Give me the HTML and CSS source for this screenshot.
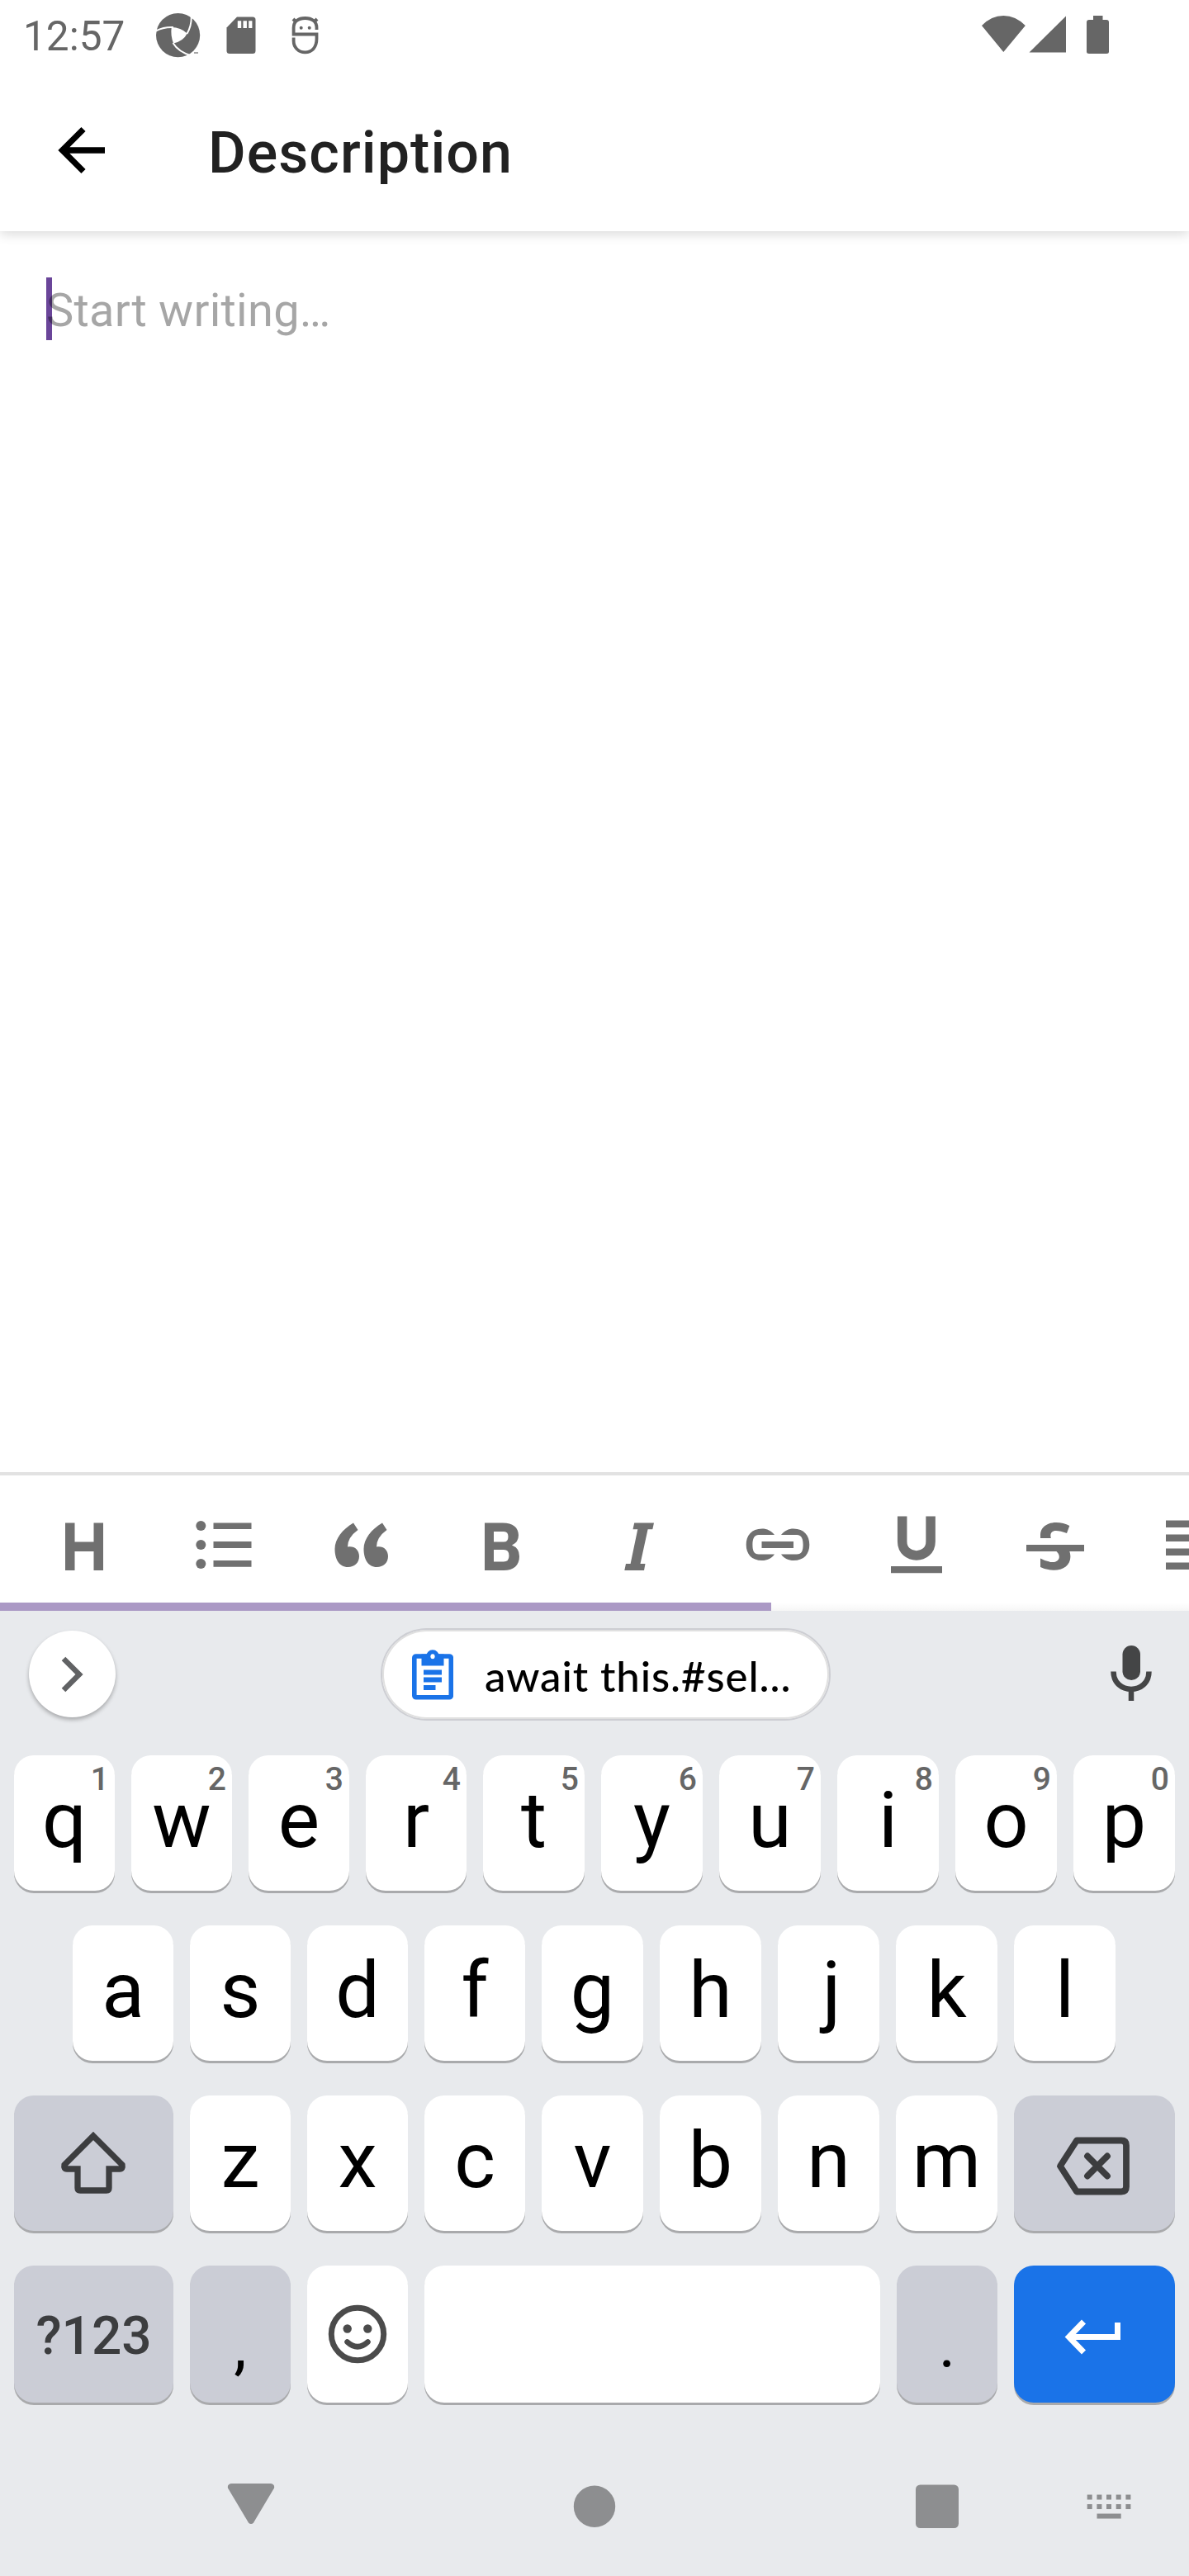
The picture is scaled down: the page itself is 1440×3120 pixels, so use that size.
FILE: index.html
```html
<!DOCTYPE html>
<html lang="en">
<head>
<meta charset="utf-8">
<title>Description</title>
<link rel="stylesheet" href="styles.css">
</head>
<body>
<div class="screen">
  <header class="top">
    <div class="status">
      <div class="status-left">
        <span class="clock">12:57</span>
        <svg class="aperture" width="54" height="54" viewBox="0 0 54 54">
          <circle cx="26.6" cy="26.6" r="26.6" fill="#666"/>
          <path d="M18.7 17Q30 17.2 37.7 24.5Q33 34 21 36.5Q17.4 27 18.7 17Z" fill="#fff"/>
          <path d="M42.5 0Q44 14 37.4 25M-1 22Q8 16.500 21 17M20.500 36Q27 47 44 52" fill="none" stroke="#fff" stroke-width="2"/>
          <path d="M46 48h5" stroke="#888" stroke-width="1.500"/>
        </svg>
        <svg class="sd" width="36" height="46" viewBox="0 0 36 46">
          <path d="M13 .5H32Q35.500 .5 35.500 4V41.500Q35.500 45 32 45H4Q.5 45 .5 41.500V13.500Z" fill="#666"/>
          <path d="M13.800 5.300h4.400v8.700h-4.400zM20.500 5.300h4.400v8.700h-4.400zM27.200 5.300h4.200v8.700h-4.200z" fill="#fff"/>
        </svg>
        <svg class="bug" width="34" height="46" viewBox="0 0 34 46" fill="none" stroke="#666" stroke-width="3.800">
          <path d="M30.500 16V13.500C30.500 6 25 2 16.500 2S2.600 6 2.600 13.500V21.500H30.500V27C30.500 37 25 43.300 16.500 43.300S2.600 37 2.600 29.500V25.500"/>
          <path d="M2 3l4 4M31 3l-4 4" stroke-width="4"/>
          <circle cx="11.700" cy="13.800" r="2" fill="#666" stroke="none"/><circle cx="21.700" cy="13.800" r="2" fill="#666" stroke="none"/>
        </svg>
      </div>
      <svg class="status-right" width="156" height="48" viewBox="0 0 156 48" fill="#666">
        <path d="M0 13Q11.500 1 26.300 1T52.800 13L26.300 45Z"/>
        <path d="M57.500 45.500L102 1.500V45.500Z"/>
        <path d="M135 1h11.500v5H151q3 0 3 3V44.500q0 2.500-3 2.500H130q-3 0-3-2.500V9q0-3 3-3h5Z"/>
      </svg>
    </div>
    <div class="appbar">
      <svg width="58" height="58" viewBox="0 0 58 58" fill="none" stroke="#000" stroke-width="7.300"><path d="M31 3.500L5.500 29L31 54.500M5.500 29H57"/></svg>
      <h1 class="title">Description</h1>
    </div>
  </header>

  <main class="editor"><span class="caret"></span><span class="placeholder">Start writing…</span></main>

  <div class="format">
    <svg class="tool" viewBox="0 0 168 164"><path d="M61 57.500h11.500v23H95.500v-23H107V115H95.500V92H72.500v23H61Z"/></svg>
    <svg class="tool" viewBox="0 0 168 164"><circle cx="57.300" cy="61" r="6"/><circle cx="57.300" cy="84" r="6"/><circle cx="57.300" cy="107" r="6"/><path d="M72.500 57.500h46V65h-46zM72.500 80h46v8h-46zM72.500 103h46v7.700h-46z"/></svg>
    <svg class="tool" viewBox="0 0 168 164"><path id="mark" d="M74 57.500L79.500 66Q67 75 67 86.500C75 85 81 90 81 98C81 106 75 111 67.500 111C56.500 111 51.500 101 51.500 89C51.500 77 61 65 74 57.500Z"/><use href="#mark" x="35"/></svg>
    <svg class="tool" viewBox="0 0 168 164"><path fill-rule="evenodd" d="M65 57.500H87C99 57.500 106 63 106 72.500Q106 81 98 84.500Q107 88 107 98C107 109 100 115 88 115H65ZM76 68V80.500H88Q93.500 80.500 93.500 74.200T88 68ZM76 90V104.500H88Q94.500 104.500 94.500 97.200T88 90Z"/></svg>
    <svg class="tool" viewBox="0 0 168 164"><path d="M78.200 57.500H102L100.300 65.200H94.600L85.500 107H91.500L90 115H66.300L68 107H73.600L82.300 65.200H76.500Z"/></svg>
    <svg class="tool" viewBox="0 0 168 164"><path id="loop" d="M80 72C76 67 71 64.500 65 64.500C52 64.500 45.700 73 45.700 84S52 103 65 103C71 103 76 101 80 95.500H61C55 95.500 53.400 91 53.400 84S55 72 61 72Z"/><use href="#loop" transform="translate(168 0) scale(-1 1)"/><path d="M64.500 80H103v8H64.500Z"/></svg>
    <svg class="tool" viewBox="0 0 168 164"><path d="M66.700 49.500V80C66.700 102.500 101.100 102.500 101.100 80V49.500" fill="none" stroke="#707070" stroke-width="11.500"/><path d="M53 110h62v8.300H53Z"/></svg>
    <svg class="tool" viewBox="0 0 168 164"><path d="M49 84h70v8H49Z"/><path d="M66 76V72C66 62 75 57 85 57Q94 57 101.300 61L98 70Q90 67 85 67C79 67 77.500 71 78.800 76Z"/><path d="M83.400 91C91 94 91 105 81 105Q74 105 66 100.500V111Q73 114.800 82 114.800C97 114.800 106 105 101 91Z"/></svg>
    <svg class="tool" viewBox="0 0 168 164"><path d="M50 54.500h68V63H50zM50 71.500h68V80H50zM50 88.500h68V97H50zM50 105.500h68v8.500H50z"/></svg>
  </div>
  <div class="scrollbar"></div>

  <section class="keyboard">
    <div class="suggest">
      <div class="expand"><svg width="28" height="44" viewBox="0 0 28 44"><path d="M3 3L22 22L3 41" fill="none" stroke="#616264" stroke-width="6.500"/></svg></div>
      <div class="clip">
        <svg width="50" height="61" viewBox="0 0 50 61">
          <rect x="2.800" y="8" width="44.500" height="49.800" rx="2" fill="none" stroke="#1a73e8" stroke-width="5.600"/>
          <path d="M11.500 5.500H38.500V19.500H11.500Z" fill="#1a73e8"/><circle cx="25" cy="8.300" r="8" fill="#1a73e8"/><ellipse cx="25" cy="8.300" rx="2.600" ry="3" fill="#fff"/>
          <path d="M14 24.500h22v6H14zM14 33.500h22v6H14zM14 43h14.500v6H14z" fill="#1a73e8"/>
        </svg>
        <span class="clip-text">await this.#sel...</span>
      </div>
      <svg class="mic" width="50" height="68" viewBox="0 0 50 68"><rect x="14.500" y="0" width="21.500" height="42" rx="10.700" fill="#444546"/><path d="M3.500 31.500C3.500 60 46.500 60 46.500 31.500M25 53V67" fill="none" stroke="#444546" stroke-width="6.500"/></svg>
    </div>
    <div class="row row1">
      <div class="key">q<sup>1</sup></div><div class="key">w<sup>2</sup></div><div class="key">e<sup>3</sup></div><div class="key">r<sup>4</sup></div><div class="key">t<sup>5</sup></div><div class="key">y<sup>6</sup></div><div class="key">u<sup>7</sup></div><div class="key">i<sup>8</sup></div><div class="key">o<sup>9</sup></div><div class="key">p<sup>0</sup></div>
    </div>
    <div class="row row2">
      <div class="key">a</div><div class="key">s</div><div class="key">d</div><div class="key">f</div><div class="key">g</div><div class="key">h</div><div class="key key-j">j</div><div class="key">k</div><div class="key">l</div>
    </div>
    <div class="row row3">
      <div class="key dark"><svg viewBox="0 0 193 164" width="193" height="164"><path d="M96 49L131 84Q132 89 128 89H115V112Q115 115 112 115H80Q77 115 77 112V89H64Q60 89 61 84Z" fill="none" stroke="#3c3d3f" stroke-width="7.300" stroke-miterlimit="8"/></svg></div>
      <div class="key">z</div><div class="key">x</div><div class="key">c</div><div class="key">v</div><div class="key">b</div><div class="key">n</div><div class="key">m</div>
      <div class="key dark"><svg viewBox="0 0 195 164" width="195" height="164"><path d="M56 85.500L76 54.500H130Q136 54.500 136 60.500V110.500Q136 116.500 130 116.500H76Z" fill="none" stroke="#3c3d3f" stroke-width="7.800" stroke-linejoin="round"/><path d="M89 73.500L113 97.500M113 73.500L89 97.500" stroke="#3c3d3f" stroke-width="7.800" stroke-linecap="round"/></svg></div>
    </div>
    <div class="row row4">
      <div class="key dark mode">?123</div>
      <div class="key dark punct">,</div>
      <div class="key"><svg viewBox="0 0 122 166" width="122" height="166" fill="none" stroke="#4b4b4b"><circle cx="61" cy="83" r="31.700" stroke-width="7"/><path d="M48.500 92.500Q61 104 73.500 92.500" stroke-width="6.500" stroke-linecap="round"/><circle cx="48.700" cy="76.500" r="5.200" fill="#4b4b4b" stroke="none"/><circle cx="73.300" cy="76.500" r="5.200" fill="#4b4b4b" stroke="none"/></svg></div>
      <div class="key"></div>
      <div class="key dark punct">.</div>
      <div class="key enter"><svg viewBox="0 0 195 166" width="195" height="166"><path d="M84.500 68L66.500 86.500L84.500 105M66.500 86.500H125.500V69" fill="none" stroke="#fff" stroke-width="7"/></svg></div>
    </div>
  </section>

  <nav class="nav">
    <svg viewBox="0 0 1440 168" width="1440" height="168" fill="#8d8e90">
      <path d="M280 56H328Q333 57 332 61.500L307 103.500Q304 106.500 301 103.500L276 61.500Q275 57 280 56Z"/>
      <circle cx="720" cy="83.700" r="25.200"/>
      <rect x="1109" y="57.500" width="52" height="52.500" rx="5.500"/>
      <path d="M1316.700 69.500h6v6h-6zM1328.400 69.500h6v6h-6zM1340 69.500h6v6h-6zM1351.700 69.500h6v6h-6zM1363.400 69.500h6v6h-6zM1316.700 81h6v6h-6zM1328.400 81h6v6h-6zM1340 81h6v6h-6zM1351.700 81h6v6h-6zM1363.400 81h6v6h-6zM1328.500 92.500h29.200v6h-29.200z"/>
    </svg>
  </nav>
</div>
</body>
</html>
```

FILE: styles.css
```css
* { box-sizing: border-box; }

body {
  margin: 0;
  background: #fff;
  font-family: Roboto, sans-serif;
}

.screen {
  width: 1440px;
  height: 3120px;
  overflow: hidden;
  display: flex;
  flex-direction: column;
}

.top {
  height: 280px;
  flex: none;
  background: #fff;
  box-shadow: 0 4px 13px rgba(0, 0, 0, .14);
}

.status {
  height: 84px;
  display: flex;
  justify-content: space-between;
  padding: 16px 97px 0 28px;
}

.status-left { display: flex; align-items: flex-start; }

.clock {
  width: 161px;
  font-size: 49.500px;
  line-height: 56px;
  color: #666;
}

.sd { margin: 4px 0 0 31px; }
.bug { margin: 4px 0 0 43px; }
.status-right { margin: 2px -2px 0 0; }

.appbar {
  height: 196px;
  display: flex;
  align-items: center;
  gap: 124px;
  padding: 0 0 0 70px;
}

.title {
  margin: 6px 0 0;
  font-size: 70px;
  font-weight: 500;
  line-height: 82px;
  letter-spacing: 1.05px;
  color: #212121;
}

.editor {
  position: relative;
  flex: 1;
  padding: 58px 56px 0;
  font-size: 56px;
  line-height: 76px;
  letter-spacing: .25px;
}

.placeholder { position: relative; color: rgba(0, 0, 0, .35); }

.caret {
  position: absolute;
  left: 56px;
  top: 56px;
  width: 7px;
  height: 76px;
  background: #6a4599;
}

.format {
  flex: none;
  height: 158px;
  border-top: 4px solid #e2e2e2;
  padding-left: 18px;
  display: flex;
  overflow: hidden;
}

.tool {
  flex: none;
  width: 168px;
  height: 164px;
  fill: #707070;
}

.scrollbar {
  flex: none;
  height: 10px;
  background: linear-gradient(90deg, #ab99c5 934px, transparent 934px), linear-gradient(#fff, #f6f6f6);
}

.keyboard {
  flex: none;
  height: 1001px;
  background: #e8eaed;
  display: flex;
  flex-direction: column;
}

.suggest {
  height: 175px;
  flex: none;
  display: flex;
  padding: 21px 45px 0 35px;
}

.expand {
  width: 105px;
  height: 105px;
  margin-top: 3px;
  border-radius: 50%;
  background: #fff;
  box-shadow: 0 3px 5px rgba(0, 0, 0, .28);
  display: flex;
  align-items: center;
  justify-content: center;
}

.clip {
  width: 545px;
  height: 112px;
  margin-left: 321px;
  border: 2px solid #cdced3;
  box-shadow: inset 0 0 0 2px #e0e0e0;
  border-radius: 56px;
  background: #fff;
  display: flex;
  align-items: center;
  gap: 38px;
  padding-left: 36px;
  font: 500 51px/60px Lato, sans-serif;
  letter-spacing: .9px;
  white-space: nowrap;
}

.clip-text { padding-top: 3px; }

.mic { margin: 21px 0 0 auto; }

.row { display: grid; column-gap: 20px; height: 206px; padding-left: 17px; flex: none; }
.row1 { grid-template-columns: repeat(4, 122px) repeat(6, 123px); }
.row2 { grid-template-columns: repeat(4, 122px) repeat(5, 123px); padding-left: 88px; }
.row3 { grid-template-columns: 193px repeat(3, 122px) repeat(4, 123px) 195px; }
.row4 { grid-template-columns: 193px 122px 122px 552px 122px 195px; }

.key {
  position: relative;
  height: 164px;
  border-radius: 24px;
  background: #fff;
  box-shadow: 0 3px 0 #a9aaac;
  text-align: center;
  font-size: 95px;
  line-height: 157px;
  color: #000;
}

.key svg { display: block; }
.key-j { padding-left: 7px; }
.key sup {
  position: absolute;
  right: 7px;
  top: 6px;
  font-size: 39px;
  font-weight: 500;
  line-height: 46px;
  color: #666;
}

.row4 .key { height: 166px; }
.dark { background: #cbcdd6; }
.mode { font-size: 64px; font-weight: 500; line-height: 172px; color: #3c3d3f; }
.punct { font-size: 78px; line-height: 194px; }
.enter { background: #1a73e8; }

.nav { flex: none; height: 168px; background: #e8eaed; }
.nav svg { display: block; }
```
